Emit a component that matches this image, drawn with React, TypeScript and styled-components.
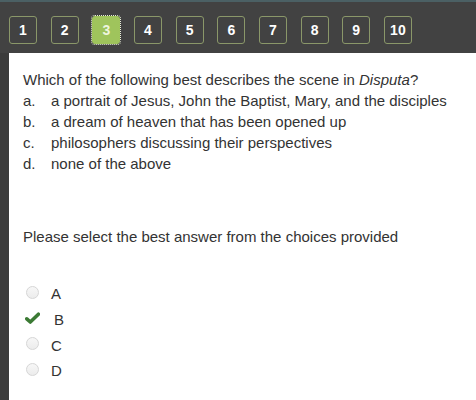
import React from "react";
import styled, { createGlobalStyle } from "styled-components";

const Global = createGlobalStyle`
  html, body { margin: 0; padding: 0; background: #ffffff; }
  body { font-family: "Liberation Sans", Arial, sans-serif; }
`;

const Page = styled.div`
  width: 476px;
  height: 400px;
  display: flex;
  flex-direction: column;
  overflow: hidden;
`;

const TopBar = styled.div`
  border-top: 2px solid #4b6064;
  background: #424242;
  display: flex;
  align-items: flex-start;
  gap: 13.67px;
  padding: 14px 0 0 9px;
  box-sizing: border-box;
  height: 53px;
`;

const NumButton = styled.div<{ $active?: boolean }>`
  width: 28px;
  height: 28px;
  box-sizing: border-box;
  border: 1px solid ${(p) => (p.$active ? "#9fc45c" : "#8a9769")};
  border-radius: 3px;
  background: ${(p) => (p.$active ? "#9fc45c" : "#424242")};
  color: ${(p) => (p.$active ? "#eef5dc" : "#ffffff")};
  outline: ${(p) => (p.$active ? "1px dotted #e8eed8" : "none")};
  outline-offset: 0;
  display: flex;
  align-items: center;
  justify-content: center;
  font-size: 14px;
  font-weight: bold;
`;

const Body = styled.div`
  flex: 1;
  display: flex;
`;

const Strip = styled.div`
  width: 9px;
  background: #3b3b3b;
`;

const Content = styled.div`
  flex: 1;
  padding: 16px 0 0 14px;
  color: #333333;
  font-size: 15px;
  line-height: 21px;
`;

const Question = styled.div``;

const Choice = styled.div`
  display: flex;
`;

const ChoiceLetter = styled.span`
  width: 28px;
`;

const Prompt = styled.div`
  margin-top: 52px;
`;

const Options = styled.div`
  margin-top: 34px;
  display: flex;
  flex-direction: column;
`;

const OptionRow = styled.div`
  height: 25.7px;
  display: flex;
  align-items: center;
  padding-left: 3px;
`;

const Radio = styled.span`
  width: 13px;
  height: 13px;
  box-sizing: border-box;
  border-radius: 50%;
  border: 1px solid #d6d6d6;
  background: linear-gradient(#f7f7f7, #ececec);
  margin-right: 12px;
  margin-top: -3px;
`;

const CheckWrap = styled.span`
  width: 16px;
  display: flex;
  margin-right: 13px;
  margin-top: -3px;
  margin-left: -1px;
`;

const OptionLabel = styled.span``;

const Check = () => (
  <CheckWrap>
    <svg width="15" height="12" viewBox="0 0 15 12">
      <path d="M1.8 6.8 L5.3 10 L13.4 2.2" fill="none" stroke="#3b7a34" strokeWidth="3.6" strokeLinecap="round" strokeLinejoin="round" />
    </svg>
  </CheckWrap>
);

export default function App() {
  const nums = [1, 2, 3, 4, 5, 6, 7, 8, 9, 10];
  const choices: [string, string][] = [
    ["a.", "a portrait of Jesus, John the Baptist, Mary, and the disciples"],
    ["b.", "a dream of heaven that has been opened up"],
    ["c.", "philosophers discussing their perspectives"],
    ["d.", "none of the above"],
  ];
  return (
    <Page>
      <Global />
      <TopBar>
        {nums.map((n) => (
          <NumButton key={n} $active={n === 3}>
            {n}
          </NumButton>
        ))}
      </TopBar>
      <Body>
        <Strip />
        <Content>
          <Question>
            Which of the following best describes the scene in <i>Disputa</i>?
          </Question>
          {choices.map(([l, t]) => (
            <Choice key={l}>
              <ChoiceLetter>{l}</ChoiceLetter>
              <span>{t}</span>
            </Choice>
          ))}
          <Prompt>Please select the best answer from the choices provided</Prompt>
          <Options>
            <OptionRow>
              <Radio />
              <OptionLabel>A</OptionLabel>
            </OptionRow>
            <OptionRow>
              <Check />
              <OptionLabel>B</OptionLabel>
            </OptionRow>
            <OptionRow>
              <Radio />
              <OptionLabel>C</OptionLabel>
            </OptionRow>
            <OptionRow>
              <Radio />
              <OptionLabel>D</OptionLabel>
            </OptionRow>
          </Options>
        </Content>
      </Body>
    </Page>
  );
}
